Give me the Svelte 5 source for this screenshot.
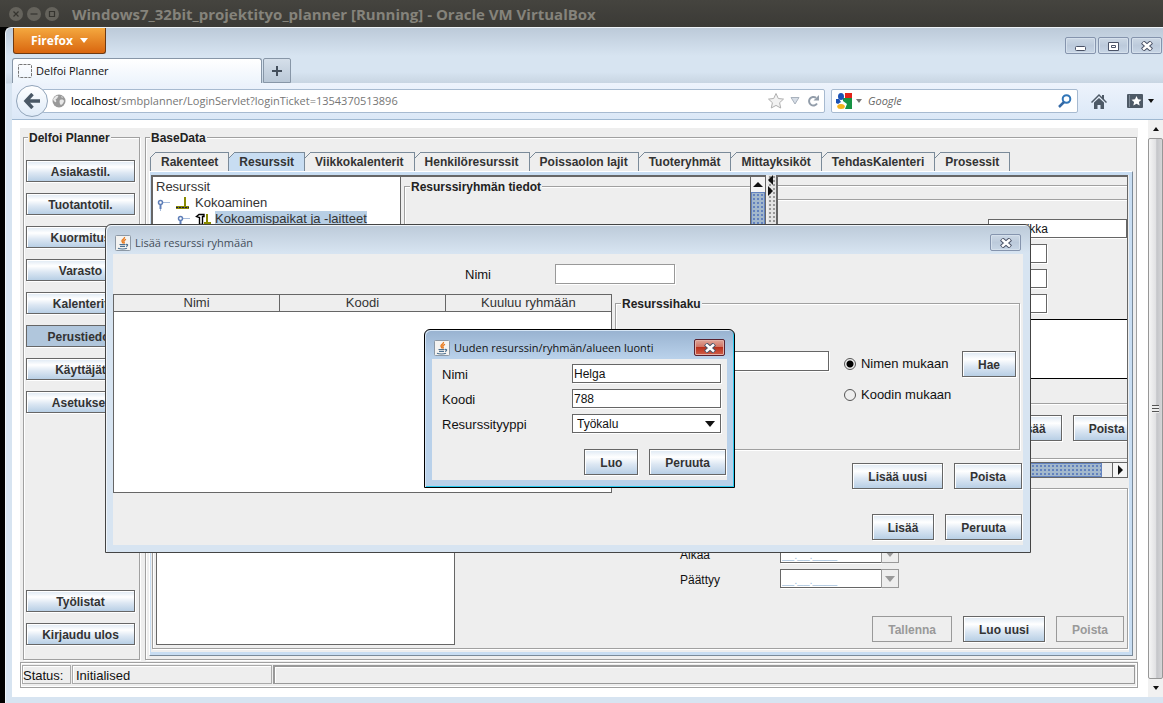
<script lang="ts">
  const navItems = [
    'Asiakastil.',
    'Tuotantotil.',
    'Kuormitus',
    'Varasto',
    'Kalenterit',
    'Perustiedot',
    'Käyttäjät',
    'Asetukset',
  ]
  const tabs = [
    'Rakenteet',
    'Resurssit',
    'Viikkokalenterit',
    'Henkilöresurssit',
    'Poissaolon lajit',
    'Tuoteryhmät',
    'Mittayksiköt',
    'TehdasKalenteri',
    'Prosessit',
  ]
  const columns = ['Nimi', 'Koodi', 'Kuuluu ryhmään']

  let activeNav = $state('Perustiedot')
  let activeTab = $state('Resurssit')
  let searchBy = $state('name')
  let resourceName = $state('Helga')
  let resourceCode = $state('788')
  let resourceType = $state('Työkalu')
</script>

{#snippet javaIcon()}
  <svg class="java" viewBox="0 0 16 16" aria-hidden="true">
    <rect x="0.5" y="0.5" width="15" height="15" rx="1" fill="#f4f3f1" stroke="#8c98a5" />
    <path d="M9.500 2C10 4 6.500 4.500 7 6.200c.2.900 1 1.300.8 2.300M11 4.300C9 5 8.400 6 9 6.800c.5.700.2 1.300-.3 1.700" fill="none" stroke="#e8791c" stroke-width="1.400" />
    <path d="M4.500 9.500h6M5 11.300h5M3 13.300c2 .9 7 .9 9 0M11 9.500c2.200-.6 2.200 1.500 0 1.800" fill="none" stroke="#4c7090" stroke-width="1.200" />
  </svg>
{/snippet}

{#snippet closeGlyph()}
  <svg viewBox="0 0 14 10" width="14" height="10" aria-hidden="true">
    <path d="M2.500 1 11.500 9M11.500 1 2.500 9" stroke="#4a5266" stroke-width="4.500" />
    <path d="M3 1.500 11 8.500M11 1.500 3 8.500" stroke="#fff" stroke-width="2.400" />
  </svg>
{/snippet}

{#snippet treeHandle()}
  <svg width="15" height="16" viewBox="0 0 15 16" aria-hidden="true">
    <path d="M4.500 9v7M7 7.500h7" stroke="#a5bbdb" />
    <circle cx="4.500" cy="7.500" r="2" fill="#fff" stroke="#5f7fb8" stroke-width="1.500" />
    <path d="M4.500 10v4" stroke="#5f7fb8" stroke-width="2" />
  </svg>
{/snippet}

{#snippet dateField(id: string, label: string)}
  <div class="date-row">
    <label for={id}>{label}</label>
    <input {id} class="field date" value="__.__.____" />
    <button class="date-open" aria-label={`${label}: valitse`}><i class="down"></i></button>
  </div>
{/snippet}

<div class="vm">
  <header class="vm-title">
    <button aria-label="Close">
      <svg viewBox="0 0 14 14"><circle cx="7" cy="7" r="7" /><path d="m4.500 4.500 5 5m0-5-5 5" /></svg>
    </button>
    <button aria-label="Minimize">
      <svg viewBox="0 0 14 14"><circle cx="7" cy="7" r="7" /><path d="M3.500 7h7" /></svg>
    </button>
    <button aria-label="Maximize">
      <svg viewBox="0 0 14 14"><circle cx="7" cy="7" r="7" /><path d="M4.500 4.500h5v5h-5z" /></svg>
    </button>
    <h1>Windows7_32bit_projektityo_planner [Running] - Oracle VM VirtualBox</h1>
  </header>

  <div class="guest">
    <div class="browser">
      <div class="browser-top">
        <button class="firefox">Firefox <i class="down white"></i></button>
        <div class="window-controls">
          <button aria-label="Minimize window">
            <svg viewBox="0 0 13 10" width="13" height="10"><rect x="1.500" y="5.500" width="10" height="4" rx="1" fill="#fff" stroke="#4a5266" /></svg>
          </button>
          <button aria-label="Restore window">
            <svg viewBox="0 0 13 10" width="13" height="10"><path d="M1.500 1.500h10v8h-10zM4.500 4.500h4v2h-4z" fill="#fff" stroke="#4a5266" /></svg>
          </button>
          <button aria-label="Close window">{@render closeGlyph()}</button>
        </div>
      </div>

      <div class="browser-tabs">
        <div class="browser-tab">
          <svg width="14" height="14" viewBox="0 0 14 14" aria-hidden="true">
            <rect x="0.500" y="0.500" width="13" height="13" rx="1" fill="none" stroke="#777" stroke-dasharray="3 1" />
          </svg>
          Delfoi Planner
        </div>
        <button class="new-tab" aria-label="New tab">
          <svg width="10" height="10" viewBox="0 0 10 10"><path d="M5 0v10M0 5h10" stroke="#444f5c" stroke-width="2" /></svg>
        </button>
      </div>

      <nav class="toolbar">
        <button class="back" aria-label="Back">
          <svg width="18" height="16" viewBox="0 0 18 16"><path d="M9.500 1 3 8l6.500 7M3.500 8H17" fill="none" stroke="#4a5866" stroke-width="3.500" /></svg>
        </button>
        <div class="address">
          <svg width="14" height="14" viewBox="0 0 14 14" aria-hidden="true">
            <circle cx="7" cy="7" r="6.500" fill="#999" />
            <path d="M3 3c2-2 4-1 3 0s-1 2-2 2 1 2 0 3-3-2-3-3zM8 6c2-1 4 0 4 1s-2 4-3 4-2-4-1-5zM9 2l2 1-1 1z" fill="#e8e8e8" />
          </svg>
          <span class="url"><b>localhost</b>/smbplanner/LoginServlet?loginTicket=1354370513896</span>
          <svg width="18" height="18" viewBox="0 0 18 18" aria-hidden="true">
            <path d="m9 1.500 2.300 5 5.200.6-3.900 3.600 1.100 5.300L9 13.400 4.300 16l1.100-5.300L1.500 7.100l5.200-.6z" fill="#f2f2f2" stroke="#b0b0b0" />
          </svg>
          <svg width="10" height="8" viewBox="0 0 10 8" aria-hidden="true">
            <path d="M1 .5h8L5 7z" fill="#d6dde6" stroke="#a9b2bd" />
          </svg>
          <svg class="reload" width="12" height="12" viewBox="0 0 12 12" aria-hidden="true">
            <path d="M9 2.800A4.300 4.300 0 1 0 10 8.500" fill="none" stroke="#929daa" stroke-width="2" />
            <path d="M6.500 5.500H12V0z" fill="#929daa" />
          </svg>
        </div>
        <div class="search">
          <svg width="16" height="16" viewBox="0 0 16 16" aria-hidden="true">
            <path d="M9 0h7v5H9z" fill="#e2231a" />
            <path d="M7 5h9v11H9l2-5-4-3z" fill="#179344" />
            <ellipse cx="5" cy="3.500" rx="3" ry="3.500" fill="#1b52b5" />
            <path d="M0 6h3l2 3-3 2-2-1z" fill="#1b52b5" />
            <ellipse cx="5" cy="13.500" rx="3.800" ry="2.500" fill="#f5b31b" />
          </svg>
          <i class="down small"></i>
          <input aria-label="Search" placeholder="Google" />
          <svg width="14" height="14" viewBox="0 0 14 14" aria-hidden="true">
            <circle cx="8.500" cy="5" r="3.800" fill="none" stroke="#3276b8" stroke-width="2" />
            <path d="m6 8-5 5" stroke="#3569a5" stroke-width="2.500" />
          </svg>
        </div>
        <button class="tool" aria-label="Home">
          <svg width="16" height="15" viewBox="0 0 16 15"><path d="M0 8 8 0l3 3V1h2v4l3 3-1 1-7-7-7 7z" fill="#4d5966" /><path d="M3 8.500 8 4l5 4.500V15H9.500v-4h-3v4H3z" fill="#4d5966" /></svg>
        </button>
        <button class="tool bookmarks" aria-label="Bookmarks">
          <svg width="16" height="14" viewBox="0 0 16 14"><rect width="16" height="14" rx="1" fill="#4d5966" /><path d="M2.500 1v12" stroke="#7d8996" /><path d="m9.500 2 1.500 3.300 3.500.4-2.600 2.400.8 3.500-3.200-1.800-3.200 1.800.8-3.500-2.600-2.400 3.500-.4z" fill="#fff" /></svg>
          <i class="down small"></i>
        </button>
      </nav>

      <div class="page">
        <main class="applet">
          <div class="columns">
            <fieldset class="etched side">
              <legend>Delfoi Planner</legend>
              {#each navItems as item (item)}
                <button class="metal" class:pressed={item === activeNav} onclick={() => (activeNav = item)}>{item}</button>
              {/each}
              <button class="metal push">Työlistat</button>
              <button class="metal">Kirjaudu ulos</button>
            </fieldset>

            <fieldset class="etched base">
              <legend>BaseData</legend>
              <div class="tabs" role="tablist">
                {#each tabs as tab (tab)}
                  <button role="tab" aria-selected={tab === activeTab} class:active={tab === activeTab} onclick={() => (activeTab = tab)}>{tab}</button>
                {/each}
              </div>
              <div class="pane">
                <div class="pane-body">
                  <div class="split">
                    <div class="tree">
                      <div>Resurssit</div>
                      <div class="node">
                        {@render treeHandle()}
                        <svg width="16" height="14" viewBox="0 0 16 14" aria-hidden="true"><path d="M1 10h8V1h2v9h3v3H1z" fill="#8a8a00" /><path d="M1 11.500h13" stroke="#15155a" stroke-dasharray="2 1" /></svg>
                        <span>Kokoaminen</span>
                      </div>
                      <div class="node deep">
                        {@render treeHandle()}
                        <svg width="16" height="14" viewBox="0 0 16 14" aria-hidden="true"><path d="M11 2h2v8h3v3H9v-3h2z" fill="#8a8a00" /><path d="M1.500 4.500 4 2.500h5v2H7.500v8h-3v-7z" fill="#fff" stroke="#000" stroke-width="1.400" /></svg>
                        <span class="selected">Kokoamispaikat ja -laitteet</span>
                      </div>
                    </div>
                    <div class="details">
                      <fieldset class="etched">
                        <legend>Resurssiryhmän tiedot</legend>
                      </fieldset>
                      <div class="vbar">
                        <i class="up"></i>
                        <div class="dots"></div>
                      </div>
                    </div>
                    <div class="divider"><i class="left"></i><i class="right"></i></div>
                    <div class="info">
                      <div class="ruled">
                        <div class="ruled inner">
                          <input class="field wide" aria-label="Tyyppi" value="Työpaikka" />
                          <input class="field short" aria-label="Arvo 1" />
                          <input class="field short" aria-label="Arvo 2" />
                          <input class="field short" aria-label="Arvo 3" />
                          <textarea aria-label="Kuvaus"></textarea>
                        </div>
                        <div class="info-buttons">
                          <button class="metal large">Lisää</button>
                          <button class="metal large">Poista</button>
                        </div>
                      </div>
                      <div class="hbar">
                        <div class="dots"></div>
                        <span class="bar-end"><i class="right"></i></span>
                      </div>
                    </div>
                  </div>

                  <div class="lower">
                    <div class="list"></div>
                    <div class="lower-form">
                      {@render dateField('starts', 'Alkaa')}
                      {@render dateField('ends', 'Päättyy')}
                      <div class="buttons">
                        <button class="metal large" disabled>Tallenna</button>
                        <button class="metal large">Luo uusi</button>
                        <button class="metal large" disabled>Poista</button>
                      </div>
                    </div>
                  </div>
                </div>
              </div>
            </fieldset>
          </div>

          <footer class="status">
            <span class="status-label">Status:</span>
            <span class="status-text">Initialised</span>
            <span class="progress"></span>
          </footer>
        </main>
        <div class="page-scroll">
          <i class="up small"></i>
          <div class="thumb"><span></span></div>
          <i class="down small"></i>
        </div>
      </div>
    </div>

    <section class="window add-resource" aria-labelledby="add-title">
      <header>
        {@render javaIcon()}
        <h2 id="add-title">Lisää resurssi ryhmään</h2>
        <button class="close" aria-label="Sulje">{@render closeGlyph()}</button>
      </header>
      <div class="window-body">
        <div class="name-row">
          <label for="group-name">Nimi</label>
          <input id="group-name" class="field" />
        </div>
        <div class="add-main">
          <div class="table-box">
            <table>
              <thead>
                <tr>
                  {#each columns as column (column)}<th>{column}</th>{/each}
                </tr>
              </thead>
            </table>
          </div>
          <div class="search-side">
            <fieldset class="etched">
              <legend>Resurssihaku</legend>
              <div class="search-form">
                <input class="field" aria-label="Hakuehto" />
                <div class="radios">
                  <label><input type="radio" value="name" bind:group={searchBy} />Nimen mukaan</label>
                  <label><input type="radio" value="code" bind:group={searchBy} />Koodin mukaan</label>
                </div>
                <button class="metal large">Hae</button>
              </div>
            </fieldset>
            <div class="buttons">
              <button class="metal large">Lisää uusi</button>
              <button class="metal large">Poista</button>
            </div>
          </div>
        </div>
        <div class="buttons last">
          <button class="metal large">Lisää</button>
          <button class="metal large">Peruuta</button>
        </div>
      </div>
    </section>

    <section class="window create focused" aria-labelledby="create-title">
      <header>
        {@render javaIcon()}
        <h2 id="create-title">Uuden resurssin/ryhmän/alueen luonti</h2>
        <button class="close" aria-label="Sulje">{@render closeGlyph()}</button>
      </header>
      <div class="window-body">
        <div class="form">
          <label for="name">Nimi</label>
          <input id="name" class="field" bind:value={resourceName} />
          <label for="code">Koodi</label>
          <input id="code" class="field" bind:value={resourceCode} />
          <label for="type">Resurssityyppi</label>
          <span class="select">
            <select id="type" class="field" bind:value={resourceType}>
              <option>Työkalu</option>
            </select>
            <i class="down"></i>
          </span>
        </div>
        <div class="buttons">
          <button class="metal large">Luo</button>
          <button class="metal large">Peruuta</button>
        </div>
      </div>
    </section>
  </div>
</div>

<style>
  :global(body) {
    background: #000;
  }

  .vm,
  .vm * {
    box-sizing: border-box;
  }

  .vm {
    display: flex;
    flex-direction: column;
    min-height: 100vh;
    overflow: hidden;
    color: #111;
    font: 13px/16px 'Liberation Sans', Arial, sans-serif;
  }

  button,
  input,
  select,
  textarea {
    margin: 0;
    padding: 0;
    border: 0;
    border-radius: 0;
    color: inherit;
    font: inherit;
  }

  h1,
  h2 {
    margin: 0;
  }

  svg {
    flex: none;
    display: block;
  }

  i {
    flex: none;
    width: 0;
    height: 0;
    border: 5px solid transparent;
  }

  i.down {
    border-top: 6px solid #111;
    border-bottom: 0;
  }

  i.up {
    border-bottom: 5px solid #111;
    border-top: 0;
  }

  i.right {
    border-left: 5px solid #111;
    border-right: 0;
  }

  i.left {
    border-right: 5px solid #111;
    border-left: 0;
  }

  i.small {
    border-width: 4px 3px;
  }

  i.down.small {
    border-bottom: 0;
  }

  i.up.small {
    border-top: 0;
  }

  i.white {
    border-width: 5px 4px 0;
    border-top-color: #fff;
  }

  /* host window */
  .vm-title {
    display: flex;
    align-items: center;
    gap: 4px;
    height: 27px;
    padding-left: 9px;
    background: linear-gradient(#45443f, #3b3a36);
  }

  .vm-title button {
    width: 14px;
    height: 14px;
    background: none;
  }

  .vm-title circle {
    fill: #65635c;
  }

  .vm-title path {
    fill: none;
    stroke: #35342f;
    stroke-width: 1.2;
  }

  .vm-title h1 {
    margin-left: 9px;
    color: #85837b;
    font: bold 15px/18px 'Open Sans', 'Noto Sans', sans-serif;
    white-space: nowrap;
  }

  .guest {
    position: relative;
    display: flex;
    flex: 1;
    padding-left: 5px;
  }

  /* browser */
  .browser {
    display: flex;
    flex: 1;
    flex-direction: column;
    min-width: 0;
    padding: 0 0 6px 6px;
    border-top: 1px solid #eef3f8;
    border-left: 1px solid #eef3f8;
    border-radius: 6px 0 0 0;
    background: linear-gradient(#bccad9, #d7e4f1 28px, #d7e4f1 44px, #c8d5e2 55px, #d7e4f1 56px);
    font-family: 'Open Sans', 'Noto Sans', sans-serif;
    font-size: 11px;
  }

  .browser-top {
    display: flex;
    justify-content: space-between;
    height: 30px;
    padding-right: 1px;
    padding-left: 1px;
  }

  .firefox {
    display: flex;
    align-items: center;
    justify-content: center;
    gap: 7px;
    width: 93px;
    height: 26px;
    border: 1px solid #6e3a12;
    border-top: 0;
    border-radius: 0 0 3px 3px;
    background: linear-gradient(#f4a83f, #d9660f);
    color: #fff;
    font-size: 12px;
    font-weight: bold;
  }

  .window-controls {
    display: flex;
    gap: 2px;
    padding-top: 9px;
  }

  .window-controls button,
  .close {
    display: grid;
    place-items: center;
    width: 31px;
    height: 17px;
    border: 1px solid #8594ad;
    border-radius: 2px;
    background: linear-gradient(#ccd8e5, #bccadb 50%, #c8d6e6);
    box-shadow: inset 0 0 0 1px #d5e0ec;
  }

  .browser-tabs {
    display: flex;
    align-items: stretch;
    gap: 1px;
    height: 25px;
  }

  .browser-tab {
    display: flex;
    align-items: center;
    gap: 4px;
    width: 250px;
    padding-left: 5px;
    border: 1px solid #8796a7;
    border-bottom: 0;
    border-radius: 3px 3px 0 0;
    background: linear-gradient(#fff, #edf4fc);
    color: #111;
  }

  .new-tab {
    display: grid;
    place-items: center;
    width: 28px;
    border: 1px solid #8796a7;
    border-radius: 2px 2px 0 0;
    background: linear-gradient(#d5dfea, #bac8d7);
  }

  .toolbar {
    display: flex;
    align-items: center;
    height: 37px;
    padding-right: 9px;
    padding-left: 4px;
    border-bottom: 1px solid #9fb8d1;
    background: linear-gradient(#edf3fc, #dbe8f7);
  }

  .back {
    z-index: 1;
    display: grid;
    flex: none;
    place-items: center;
    width: 32px;
    height: 32px;
    border: 1px solid #92a5ba;
    border-radius: 50%;
    background: linear-gradient(#fff, #dfebf8);
  }

  .address,
  .search {
    display: flex;
    align-items: center;
    height: 24px;
    border: 1px solid #a7bad0;
    border-radius: 2px;
    background: #fff;
  }

  .address {
    flex: 1;
    gap: 5px;
    margin-left: -6px;
    padding: 0 5px 0 9px;
    color: #767676;
  }

  .url {
    flex: 1;
    overflow: hidden;
    white-space: nowrap;
  }

  .url b {
    color: #000;
    font-weight: normal;
  }

  .reload {
    margin-left: 2px;
  }

  .search {
    gap: 4px;
    width: 247px;
    margin-left: 6px;
    padding: 0 5px 0 4px;
  }

  .search input {
    flex: 1;
    min-width: 0;
    margin-left: 2px;
    outline: 0;
    font-style: italic;
  }

  .search input::placeholder {
    color: #666;
  }

  .search i.small {
    border-top-color: #777;
  }

  .tool {
    display: flex;
    align-items: center;
    gap: 5px;
    margin-left: 13px;
    background: none;
  }

  .bookmarks {
    margin-left: 20px;
  }

  .page {
    display: flex;
    flex: 1;
    gap: 10px;
    padding-left: 8px;
    background: #fff;
    font-family: 'Liberation Sans', Arial, sans-serif;
    font-size: 13px;
  }

  .page-scroll {
    display: flex;
    flex: none;
    flex-direction: column;
    align-items: center;
    justify-content: space-between;
    gap: 7px;
    width: 15px;
    padding: 7px 0;
    background: #f1f1f1;
  }

  .thumb {
    display: grid;
    flex: 1;
    place-items: center;
    width: 15px;
    border: 1px solid #979797;
    border-radius: 2px;
    background: linear-gradient(90deg, #f5f5f5, #e2e2e4 50%, #c4c5c9 60%, #d6d6d8);
  }

  .thumb span {
    width: 7px;
    height: 8px;
    background: repeating-linear-gradient(#555 0 1px, #eee 1px 3px);
  }

  /* applet */
  .applet {
    display: flex;
    flex: 1;
    flex-direction: column;
    gap: 2px;
    min-width: 0;
    margin: 8px 0 9px;
    background: #eee;
  }

  .columns {
    display: flex;
    flex: 1;
    gap: 5px;
    padding: 0 1px 0 3px;
  }

  .etched {
    min-width: 0;
    margin: 0;
    padding: 0;
    border: 1px solid #a0a0a0;
    box-shadow: 1px 1px #fff, inset 1px 1px #fff;
  }

  legend {
    margin-left: 5px;
    padding: 2px 1px 0;
    background: #eee;
    color: #222;
    font-size: 12px;
    font-weight: bold;
    line-height: 16px;
  }

  .metal {
    flex: none;
    height: 22px;
    padding-top: 2px;
    border: 1px solid #666;
    background: linear-gradient(#dde8f3, #fff 30%, #dce7f3 60%, #b8cfe5);
    box-shadow: 1px 1px #fff, inset 1px 1px #fff;
    color: #333;
    font-size: 12px;
    font-weight: bold;
  }

  .metal.pressed {
    background: #b0c6dc;
    box-shadow: 1px 1px #fff;
  }

  .metal.large {
    height: 26px;
    padding: 2px 15px 0;
  }

  .metal:disabled {
    border-color: #999;
    background: #eee;
    box-shadow: none;
    color: #999;
  }

  .side {
    display: flex;
    flex: none;
    flex-direction: column;
    gap: 11px;
    width: 117px;
    padding: 14px 4px 14px 2px;
  }

  .side legend {
    margin-left: 2px;
  }

  .push {
    margin-top: auto;
  }

  .base {
    display: flex;
    flex: 1;
    flex-direction: column;
    padding: 6px 3px 3px;
  }

  .base > legend {
    margin-left: 1px;
  }

  .tabs {
    display: flex;
    height: 19px;
    padding-left: 1px;
  }

  .tabs button {
    position: relative;
    padding: 0 10px;
    border-top: 1px solid #7a8a99;
    border-right: 1px solid #7a8a99;
    background: #eee;
    color: #333;
    font-size: 12px;
    font-weight: bold;
    white-space: nowrap;
  }

  .tabs button::before {
    position: absolute;
    top: -1px;
    left: 0;
    width: 6px;
    height: 6px;
    background: linear-gradient(135deg, #eee 45%, #7a8a99 45% 58%, transparent 58%);
    content: '';
  }

  .tabs button:first-child {
    border-left: 1px solid #7a8a99;
  }

  .tabs button:first-child::before {
    left: -1px;
  }

  .tabs .active {
    background: #c8ddf2;
  }

  .pane {
    display: flex;
    flex: 1;
    padding: 3px 3px 3px 1px;
    border: 1px solid #7a8a99;
    border-top-color: #fff;
    border-left-color: #fff;
    background: #c8ddf2;
  }

  .pane-body {
    display: flex;
    flex: 1;
    flex-direction: column;
    gap: 10px;
    min-width: 0;
    padding: 0 1px 3px 0;
    background: #eee;
  }

  .split {
    display: flex;
    height: 303px;
  }

  .tree {
    flex: 0 1 250px;
    padding: 2px 0 0 3px;
    border: 1px solid #666;
    border-width: 2px 1px 0 2px;
    background: #fff;
    color: #333;
    white-space: nowrap;
    overflow: hidden;
  }

  .node {
    display: flex;
    align-items: center;
    gap: 4px;
  }

  .deep {
    padding-left: 20px;
  }

  .selected {
    background: #b8cfe5;
  }

  .details {
    display: flex;
    flex: 0 1 365px;
    padding-left: 3px;
    border-top: 2px solid #666;
  }

  .details .etched {
    flex: 1;
    border-right: 0;
  }

  .vbar {
    display: flex;
    flex: none;
    flex-direction: column;
    align-items: center;
    gap: 5px;
    width: 16px;
    padding-top: 5px;
    border: 1px solid #666;
    border-top: 0;
    background: #f4f4f4;
  }

  .dots {
    flex: 1;
    align-self: stretch;
    border: 1px solid #6382bf;
    background: radial-gradient(#6382bf 1px, transparent 1px) 0 0 / 4px 4px #a3b8cc;
  }

  .divider {
    display: flex;
    flex: none;
    flex-direction: column;
    gap: 1px;
    width: 8px;
    margin-left: 2px;
    background: radial-gradient(#999 1px, transparent 1px) 0 0 / 4px 4px #e4e4e4;
  }

  .info {
    display: flex;
    flex: 1;
    flex-direction: column;
    min-width: 0;
    overflow: hidden;
    border: 1px solid #666;
    border-width: 2px 1px 1px 2px;
  }

  .ruled {
    margin-top: 8px;
    border: 1px solid #a0a0a0;
    border-width: 1px 0;
    box-shadow: 0 1px #fff, inset 0 1px #fff;
  }

  .ruled.inner {
    display: flex;
    flex-direction: column;
    gap: 6px;
    margin-top: 13px;
    padding: 19px 0 24px;
  }

  .field {
    min-width: 0;
    height: 19px;
    padding: 1px 1px 0;
    border: 1px solid #666;
    background: #fff;
    box-shadow: 1px 1px #fff;
    font-size: 12px;
    outline: 0;
  }

  .info .field {
    margin-left: 210px;
  }

  .info .wide {
    padding-left: 5px;
  }

  .info .short {
    width: 59px;
  }

  textarea {
    height: 60px;
    border: 1px solid #000;
    border-width: 1px 0;
    background: #fff;
    resize: none;
  }

  .info-buttons {
    display: flex;
    gap: 11px;
    padding: 11px 0 17px 221px;
  }

  .hbar {
    display: flex;
    align-items: center;
    gap: 10px;
    height: 16px;
    margin-top: 3px;
    border-top: 1px solid #666;
  }

  .bar-end {
    display: grid;
    align-self: stretch;
    place-items: center;
    width: 15px;
    border-left: 1px solid #666;
    background: #f4f4f4;
  }

  .lower {
    display: flex;
    flex: 1;
    margin-left: 1px;
    padding: 3px;
    border: 1px solid #a0a0a0;
    box-shadow: 1px 1px #fff, inset 1px 1px #fff;
  }

  .list {
    flex: 0 1 299px;
    border: 1px solid #666;
    background: #fff;
  }

  .lower-form {
    display: flex;
    flex: 1;
    flex-direction: column;
    justify-content: flex-end;
    gap: 6px;
    padding-bottom: 3px;
  }

  .date-row {
    display: flex;
    align-items: center;
    padding-left: 225px;
  }

  .date-row label {
    width: 100px;
    padding-top: 2px;
    font-size: 12px;
  }

  .date {
    width: 101px;
    padding-top: 3px;
    border-right: 0;
    color: #a3bfdc;
    font-size: 11px;
  }

  .date-open {
    display: grid;
    place-items: center;
    width: 18px;
    height: 19px;
    border: 1px solid #999;
    background: #eee;
  }

  .date-open i {
    border-top-color: #999;
  }

  .buttons {
    display: flex;
    justify-content: flex-end;
    gap: 11px;
  }

  .lower-form .buttons {
    margin-top: 22px;
  }

  .status {
    display: flex;
    gap: 1px;
    height: 26px;
    padding: 2px 2px 3px 1px;
    border: 1px solid #a0a0a0;
    box-shadow: inset 1px 1px #fff, inset -1px -1px #fff;
    line-height: 20px;
  }

  .status span {
    border: 1px solid #aaa;
    box-shadow: inset 1px 1px #fff;
  }

  .status-label {
    width: 49px;
  }

  .status-text {
    width: 200px;
    padding-left: 3px;
  }

  .status .progress {
    flex: 1;
    border-width: 2px 1px 1px 2px;
    border-color: #999;
  }

  /* desktop windows */
  .window {
    position: absolute;
    display: flex;
    flex-direction: column;
    padding: 0 7px 7px;
    border: 1px solid #444;
    border-radius: 6px 6px 0 0;
    background: linear-gradient(#bccad9, #d7e4f1 28px);
    box-shadow: inset 1px 1px #f0f5fa;
  }

  .add-resource {
    top: 197px;
    left: 105px;
    width: 926px;
    height: 329px;
  }

  .create {
    top: 302px;
    left: 424px;
    width: 311px;
    height: 159px;
  }

  .focused {
    border-color: #000;
    background: linear-gradient(#98b2d0, #b9d1ea 28px);
    box-shadow: inset 1px 1px #d5e5f5, inset -1px -1px #29c9ee;
  }

  .window header {
    display: flex;
    flex: none;
    align-items: center;
    gap: 4px;
    height: 29px;
    padding: 6px 2px 0;
  }

  .java {
    width: 16px;
    height: 16px;
  }

  .window h2 {
    flex: 1;
    color: #444e5a;
    font: 11px/16px 'Open Sans', 'Noto Sans', sans-serif;
    white-space: nowrap;
  }

  .focused h2 {
    color: #111;
  }

  .focused .close {
    border-color: #5a2230;
    background: linear-gradient(#dfa598, #cf7060 50%, #b8301c 50%, #d0604a);
    box-shadow: inset 0 0 0 1px #e3b0a6;
  }

  .window-body {
    display: flex;
    flex: 1;
    flex-direction: column;
    background: #eee;
  }

  .window-body label {
    padding-top: 2px;
  }

  .name-row {
    display: flex;
    align-items: center;
    height: 40px;
    padding-left: 352px;
  }

  .name-row label {
    width: 90px;
  }

  .name-row .field {
    width: 120px;
    height: 20px;
    border-color: #999;
  }

  .add-main {
    display: flex;
    gap: 3px;
  }

  .table-box {
    flex: none;
    width: 499px;
    height: 199px;
    border: 1px solid #666;
    background: #fff;
  }

  table {
    width: 100%;
    border-collapse: collapse;
    table-layout: fixed;
  }

  th {
    height: 16px;
    padding: 1px 0 0;
    border-right: 1px solid #666;
    border-bottom: 1px solid #666;
    background: #eee;
    color: #333;
    font-weight: normal;
    line-height: 14px;
  }

  th:last-child {
    border-right: 0;
  }

  .search-side {
    display: flex;
    flex: 1;
    flex-direction: column;
    gap: 13px;
  }

  .search-side .etched {
    height: 156px;
    margin-right: 3px;
  }

  .search-form {
    display: flex;
    align-items: flex-start;
    padding: 39px 3px 0 32px;
  }

  .search-form .field {
    flex: 1;
    height: 20px;
  }

  .radios {
    display: flex;
    flex-direction: column;
    gap: 13px;
    width: 118px;
    margin: 3px 0 0 15px;
  }

  .radios label {
    display: flex;
    align-items: center;
    gap: 5px;
    white-space: nowrap;
  }

  .radios input {
    width: 12px;
    height: 12px;
    border: 1px solid #555;
    border-radius: 50%;
    appearance: none;
  }

  .radios input:checked {
    background: radial-gradient(#000 3px, transparent 4px);
  }

  .window .buttons {
    padding-right: 1px;
  }

  .window .last {
    margin-top: 21px;
  }

  .form {
    display: grid;
    grid-template-columns: 130px 1fr;
    align-items: center;
    gap: 6px 0;
    padding: 5px 6px 0 10px;
  }

  .form label {
    line-height: 16px;
  }

  .select {
    position: relative;
    display: flex;
  }

  .select select {
    flex: 1;
    padding: 0 4px;
    appearance: none;
  }

  .select i {
    position: absolute;
    top: 7px;
    right: 6px;
    pointer-events: none;
  }

  .create .buttons {
    margin-top: 16px;
  }
</style>
